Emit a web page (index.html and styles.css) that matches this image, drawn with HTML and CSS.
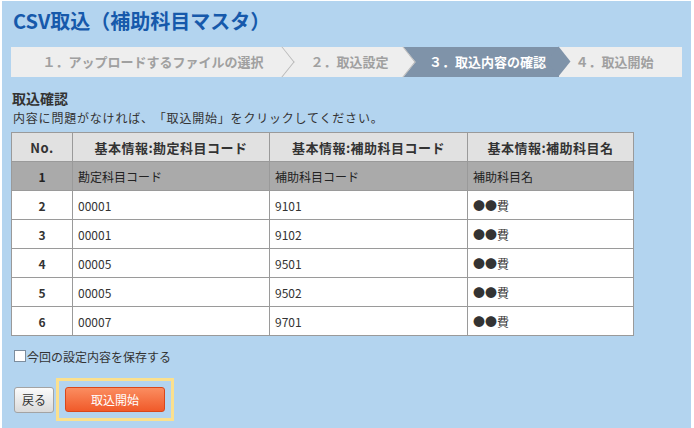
FILE: index.html
```html
<!DOCTYPE html>
<html lang="ja">
<head>
    <meta charset="UTF-8">
    <title>CSV取込（補助科目マスタ）</title>
    <link rel="stylesheet" href="styles.css">
</head>
<body>
    <div class="page">
        <h1 class="title">CSV取込（補助科目マスタ）</h1>

        <div class="steps">
            <div class="step step1">１．アップロードするファイルの選択</div>
            <div class="step step2">２．取込設定</div>
            <div class="step step3 active">３．取込内容の確認</div>
            <div class="step step4">４．取込開始</div>
        </div>

        <h2 class="heading">取込確認</h2>
        <p class="desc">内容に問題がなければ、「取込開始」をクリックしてください。</p>

        <table class="grid">
            <colgroup>
                <col class="c-no">
                <col class="c-code">
                <col class="c-sub">
                <col class="c-name">
            </colgroup>
            <tr class="head">
                <th>No.</th>
                <th>基本情報:勘定科目コード</th>
                <th>基本情報:補助科目コード</th>
                <th>基本情報:補助科目名</th>
            </tr>
            <tr class="caption">
                <td class="no">1</td>
                <td>勘定科目コード</td>
                <td>補助科目コード</td>
                <td>補助科目名</td>
            </tr>
            <tr>
                <td class="no">2</td>
                <td>00001</td>
                <td>9101</td>
                <td>●●費</td>
            </tr>
            <tr>
                <td class="no">3</td>
                <td>00001</td>
                <td>9102</td>
                <td>●●費</td>
            </tr>
            <tr>
                <td class="no">4</td>
                <td>00005</td>
                <td>9501</td>
                <td>●●費</td>
            </tr>
            <tr>
                <td class="no">5</td>
                <td>00005</td>
                <td>9502</td>
                <td>●●費</td>
            </tr>
            <tr>
                <td class="no">6</td>
                <td>00007</td>
                <td>9701</td>
                <td>●●費</td>
            </tr>
        </table>

        <label class="save">
            <input type="checkbox" class="check">今回の設定内容を保存する
        </label>

        <div class="actions">
            <button class="btn-back">戻る</button>
            <div class="focus-frame">
                <button class="btn-start">取込開始</button>
            </div>
        </div>
    </div>
</body>
</html>
```

FILE: styles.css
```css
* {
    margin: 0;
    padding: 0;
    box-sizing: border-box;
}

body {
    font-family: "Noto Sans CJK JP", sans-serif;
    background: white;
    color: #333;
    text-spacing-trim: space-all;
}

.page {
    margin: 1px 3px 0 2px;
    height: 427px;
    background: #b3d4ef;
    padding: 8px 9px 0 9px;
}

.title {
    font-size: 20px;
    line-height: 24px;
    font-weight: bold;
    color: #1659ab;
    margin-left: 2px;
}

/* wizard steps */
.steps {
    display: flex;
    height: 30px;
    margin-top: 14px;
    background: #eeeeee;
}

.step {
    position: relative;
    height: 30px;
    line-height: 30px;
    font-size: 13px;
    font-weight: bold;
    color: #a0a0a0;
    text-align: center;
    background: #eeeeee;
    padding-left: 12px;
    white-space: nowrap;
}

.step::after {
    content: "";
    position: absolute;
    top: 4.4px;
    right: -10.6px;
    width: 21.2px;
    height: 21.2px;
    background: inherit;
    border-top: 1px solid #b9b9b9;
    border-right: 1px solid #b9b9b9;
    transform: scaleX(0.8) rotate(45deg);
    z-index: 1;
}

.step1 { width: 272px; }
.step2 { width: 121px; }
.step3 { width: 155px; }
.step4 { width: 123px; padding: 0 12px 0 0; }

.step4::after {
    display: none;
}

.step.active {
    background: #7f93a9;
    color: white;
}

.step.active::after {
    border: none;
}

.heading {
    font-size: 14px;
    line-height: 18px;
    font-weight: bold;
    margin: 12px 0 0 1px;
    color: #333;
}

.desc {
    font-size: 12px;
    line-height: 16px;
    letter-spacing: 0.8px;
    margin: 3px 0 0 2px;
}

/* table */
.grid {
    margin-top: 6px;
    width: 622px;
    border-collapse: collapse;
    table-layout: fixed;
    background: white;
    font-size: 12px;
}

.c-no { width: 61px; }
.c-code { width: 197px; }
.c-sub { width: 198px; }
.c-name { width: 166px; }

.grid th,
.grid td {
    border: 1px solid #9a9a9a;
    height: 29px;
    padding: 0 5px;
    text-align: left;
    font-weight: normal;
    color: #333;
}

.grid .head th {
    background: #e1e1e1;
    text-align: center;
    font-weight: bold;
    font-size: 13px;
    letter-spacing: 0.5px;
}

.grid .caption td {
    background: #aaaaaa;
    color: #222;
}

.grid td.no {
    text-align: center;
    font-weight: bold;
}

.save {
    display: flex;
    align-items: center;
    height: 16px;
    margin: 12px 0 0 3px;
    font-size: 12px;
}

.check {
    appearance: none;
    width: 12px;
    height: 12px;
    border: 1px solid #7d8d9d;
    background: white;
    margin-right: 1px;
}

/* buttons */
.actions {
    display: flex;
    align-items: center;
    margin: 14px 0 0 3px;
}

.btn-back {
    width: 40px;
    height: 26px;
    border: 1px solid #a3a3a3;
    border-radius: 3px;
    background: linear-gradient(#fbfbfb, #dadada);
    font-family: "Noto Sans CJK JP", sans-serif;
    font-size: 12px;
    color: #333;
}

.focus-frame {
    margin-left: 2px;
    border: 3px solid #fbe08e;
    padding: 6px;
}

.btn-start {
    display: block;
    width: 100px;
    height: 25px;
    border: 1px solid #d9471a;
    border-radius: 3px;
    background: linear-gradient(#fb8d60, #f05a2a);
    font-family: "Noto Sans CJK JP", sans-serif;
    font-size: 12px;
    color: white;
}
```
